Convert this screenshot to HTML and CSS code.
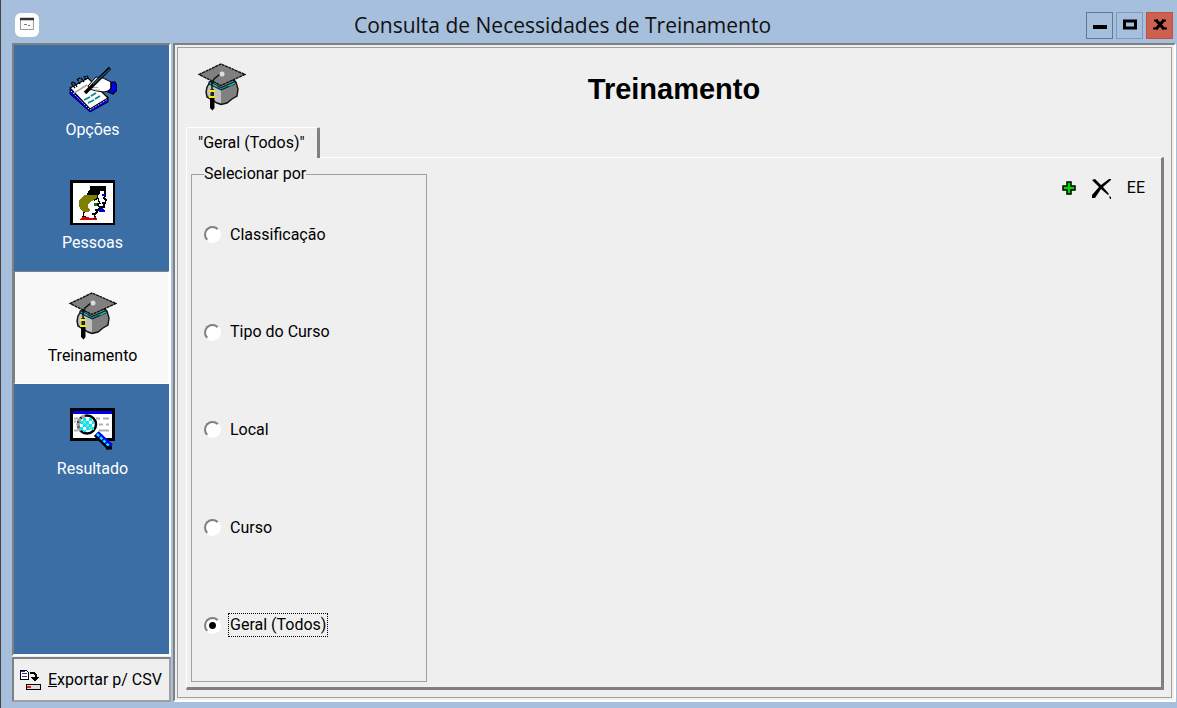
FILE: index.html
```html
<!DOCTYPE html>
<html lang="pt-BR">
<head>
  <meta charset="UTF-8">
  <meta name="viewport" content="width=device-width, initial-scale=1.0">
  <title>Consulta de Necessidades de Treinamento</title>
  <link rel="stylesheet" href="styles.css">
</head>
<body>
  <!-- shared icon: graduation cap -->
  <svg class="defs" aria-hidden="true">
    <symbol id="cap" viewBox="0 0 48 48">
      <path d="M12 19l-3 5-1 5 1 5 5 3 5 3 4 1.500 6-1.500 5-4 5-3 1-7-2-7-2-2z" fill="#808080" stroke="#111" stroke-width="1.400"/>
      <path d="M12 21l11 5v14l-4-1-4-3-5-3-1-4 1-5z" fill="#c0c0c0"/>
      <path d="M11 18.500l12 6 14-6v2.500l-14 6-12-6z" fill="#008c8c" stroke="#111"/>
      <path d="M12 20l7 3.500M31 23l6-3" fill="none" stroke="#00d0d0" stroke-width="1.200"/>
      <path d="M1 11.500l22-10.500 24 10.500-24 11z" fill="#808080" stroke="#111" stroke-width="1.400" stroke-dasharray="3 .6"/>
      <path d="M22 11l-6 5-2 4v8" fill="none" stroke="#111" stroke-width="1.500"/>
      <circle cx="24" cy="11" r="2.500" fill="#ddd"/>
      <path d="M12.500 26h3.500v11h-3.500z" fill="#222"/>
      <path d="M11 28h6M11 34h6" stroke="#ee0" stroke-width="1.800"/>
      <path d="M12 35h4.500v10l-2 2.500-2.500-2.500z"/>
    </symbol>
  </svg>

  <div class="window">
    <header class="titlebar">
      <svg class="app-icon" viewBox="0 0 24 24">
        <rect width="24" height="24" rx="6" fill="#fff"/>
        <path d="M5.500 6v10.500h13V6" fill="#fafafa" stroke="#999"/>
        <path d="M5 6h14" stroke="#333" stroke-width="2.500"/>
        <path d="M9 11.500h3M13 12.500h2" stroke="#777"/>
      </svg>
      <h1 class="caption">Consulta de Necessidades de Treinamento</h1>
      <div class="win-buttons">
        <button class="win-btn minimize" aria-label="Minimizar"><svg viewBox="0 0 14 12"><path d="M0 8h14" stroke="#000" stroke-width="4"/></svg></button>
        <button class="win-btn" aria-label="Maximizar"><svg viewBox="0 0 14 12"><path d="M1.500 2h11v7h-11z" fill="none" stroke="#000" stroke-width="3"/></svg></button>
        <button class="win-btn close" aria-label="Fechar"><svg viewBox="0 0 14 12"><path d="M3 1l8 9M11 1L3 10" stroke="#000" stroke-width="3"/><path d="M1 1.500h4M9 1.500h4M0 9.500h5M9 9.500h5" stroke="#000" stroke-width="2"/></svg></button>
      </div>
    </header>

    <div class="content">
      <aside class="sidebar">
        <nav class="menu">
          <button class="menu-item">
            <svg class="icon" viewBox="0 0 48 48">
              <path d="M1 23v5l20 18 18-10v-5z" fill="#0000e0" stroke="#00004a"/>
              <path d="M1 22l18-10 20 20-18 11z" fill="#fff" stroke="#000" stroke-width="1.200"/>
              <path d="M2 25l19 19 18-11" fill="none" stroke="#ddd" stroke-dasharray="1.500 1.500"/>
              <path d="M5 27l13-8" stroke="#aaa" stroke-width="1.500"/>
              <path d="M6 22l-4-5 3-1 3 5M11 18l-3-5 4-1 3 4M17 14l-2-3 3-1 2 3" fill="none" stroke="#000" stroke-width="1.300" stroke-dasharray="2.500 .8"/>
              <path d="M19 20l8-9 7 1 8 4v8l-7 2-7-1-8-2z" fill="#fff" stroke="#000"/>
              <path d="M21 21.500h8M26 24h5" stroke="#aaa"/>
              <path d="M42 16h4l2 4v4l-4 4-5-2 3-4z" fill="#0000f0" stroke="#000" stroke-width="1.200"/>
              <path d="M16 27L41 2" stroke="#000" stroke-width="3.500"/>
              <path d="M24 18L41 3" stroke="#285078" stroke-width="1.400"/>
              <path d="M15 34l6-3M22 30l5-3M19 37l6-3M26 33l5-3" stroke="#008888" stroke-width="1.800"/>
            </svg>
            <span>Opções</span>
          </button>
          <button class="menu-item">
            <svg class="icon small" viewBox="0 0 45 45" shape-rendering="crispEdges">
              <rect x="1" y="1" width="43" height="43" rx="1" fill="#fff" stroke="#000" stroke-width="3"/>
              <path d="M20 6h16v5h-6v2l-3 3h-10l1-5 2-2z"/>
              <path d="M35 11v5l-1 2 2 2-1 3h-2l1 2v2h-3l-2 2M27 16l3 8" fill="none" stroke="#000" stroke-width="1.500"/>
              <path d="M32 14h3v2h-3zM29 31l2-3h2v1l2 2v1h-6z" fill="#0000e0"/>
              <path d="M14 15h13v3l-3 2-3 1-3 4v3l2 2-1 2h-5l-4-3-1-4v-4l2-3z" fill="#808000"/>
              <path d="M27 19l-3 1M28 23v2l2 3-2 2h-2l1 2-2 2h-3M14 32l-1 5M24 34l2 5" fill="none" stroke="#000" stroke-width="1.500"/>
              <path d="M24 23h3v3h-3z" fill="#008000"/>
              <path d="M11 38l3-2 7 2 5-1 1 2v1H10z" fill="#e00000"/>
              <path d="M13 36l3 1M23 38h3" stroke="#000"/>
            </svg>
            <span>Pessoas</span>
          </button>
          <button class="menu-item selected" aria-current="page">
            <svg class="icon"><use href="#cap"/></svg>
            <span>Treinamento</span>
          </button>
          <button class="menu-item">
            <svg class="icon small" viewBox="0 0 45 45">
              <path d="M1.500 3.500h42v30h-42z" fill="#fff" stroke="#000" stroke-width="3"/>
              <path d="M3 6.500h39" stroke="#0000f0" stroke-width="3"/>
              <path d="M26 12.500h4M33 12.500h6M4 12.500h4M4 15.500h2M29 18.500h4M36 18.500h3M29 24.500h10M4 24.500h4" stroke="#b0b0b0" stroke-width="1.800"/>
              <circle cx="17" cy="18.500" r="9" fill="#fff" stroke="#000" stroke-width="2.500"/>
              <path d="M15 9.800a9 9 0 0 0-4 15.500" fill="none" stroke="#a0a0a0" stroke-width="2.800" stroke-dasharray="4 1"/>
              <path d="M13 12h3v3h-3zM19 12h3v3h-3zM10 15h3v3h-3zM16 15h3v3h-3zM22 15h2v3h-2zM13 18h3v3h-3zM19 18h3v3h-3zM10 21h3v3h-3zM16 21h3v3h-3zM22 21h2v3h-2zM13 24h3v2h-3z" fill="#00e8f0"/>
              <path d="M13 15h3v3h-3zM19 21h3v3h-3zM16 18h3v3h-3z" fill="#70dada"/>
              <path d="M26 28l14 14" stroke="#000" stroke-width="6"/>
              <path d="M27 27l14 13" stroke="#0000f0" stroke-width="5"/>
              <path d="M27 28l12 12" stroke="#00e8ff" stroke-width="2.500" stroke-dasharray="3 1.500"/>
              <path d="M36 42h6" stroke="#000" stroke-width="3"/>
            </svg>
            <span>Resultado</span>
          </button>
        </nav>
        <button class="export">
          <svg class="export-icon" viewBox="0 0 22 21" shape-rendering="crispEdges">
            <path d="M1 1h6l2 2v7H1z" fill="#fff" stroke="#000"/>
            <path d="M2 2h4v1H2zM3 4h5v1H3zM3 7h5v1H3z" fill="#3030a0"/>
            <path d="M11 4h4l2 2v3" fill="none" stroke="#000" stroke-width="2"/>
            <path d="M11 8h9l-4 5z"/>
            <path d="M7 15h14v5H7z" fill="#ddd" stroke="#000"/>
            <path d="M8 17h4v2H8z" fill="#e02020"/>
          </svg>
          <span><u>E</u>xportar p/ CSV</span>
        </button>
      </aside>

      <main class="panel">
        <div class="panel-head">
          <svg class="icon"><use href="#cap"/></svg>
          <h2>Treinamento</h2>
        </div>
        <div class="tabs" role="tablist">
          <button class="tab" role="tab" aria-selected="true">"Geral (Todos)"</button>
        </div>
        <div class="tab-page" role="tabpanel">
          <fieldset class="group">
            <legend>Selecionar por</legend>
            <label class="option"><input type="radio" name="filtro"><span>Classificação</span></label>
            <label class="option"><input type="radio" name="filtro"><span>Tipo do Curso</span></label>
            <label class="option"><input type="radio" name="filtro"><span>Local</span></label>
            <label class="option"><input type="radio" name="filtro"><span>Curso</span></label>
            <label class="option"><input type="radio" name="filtro" checked><span>Geral (Todos)</span></label>
          </fieldset>
          <div class="tools">
            <button class="tool" aria-label="Adicionar"><svg width="14" height="14" viewBox="0 0 14 14"><path d="M5 1h4v4h4v4H9v4H5V9H1V5h4z" fill="#00d800" stroke="#000" stroke-width="1.500"/></svg></button>
            <button class="tool" aria-label="Excluir"><svg width="21" height="21" viewBox="0 0 21 21"><path d="M1 2l3-1 6 6 8-6h2v1l-8 7 6 7-1 1-7-6-4 6-2 3H1v-3l7-8z"/><path d="M18 18l2 1v2h-1z"/></svg></button>
            <button class="tool">EE</button>
          </div>
        </div>
      </main>
    </div>
  </div>
</body>
</html>
```
FILE: styles.css
```css
* {
  box-sizing: border-box;
}
body {
  margin: 0;
  background: #a6bfdc;
  color: #000;
  font-family: Roboto, "Liberation Sans", sans-serif;
  font-size: 16px;
  line-height: 20px;
}
button {
  margin: 0;
  padding: 0;
  border: 0;
  background: none;
  color: inherit;
  font: inherit;
}
svg {
  display: block;
}
.defs {
  position: absolute;
  width: 0;
  height: 0;
}

.window {
  display: flex;
  flex-direction: column;
  min-height: 100vh;
  padding: 0 1px 6px 11px;
  border-left: 1px solid #444;
}

/* title bar */
.titlebar {
  display: flex;
  align-items: center;
  height: 43px;
  padding: 7px 3px 0 3px;
}
.app-icon {
  width: 24px;
  height: 24px;
}
.caption {
  flex: 1;
  margin: 0;
  color: #111;
  font-family: "Open Sans", "Noto Sans", sans-serif;
  font-size: 21px;
  font-weight: normal;
  line-height: 28px;
  text-align: center;
}
.win-buttons {
  display: flex;
  gap: 3px;
}
.win-btn {
  display: flex;
  align-items: center;
  justify-content: center;
  width: 27px;
  height: 27px;
  border: 1px solid #8299bf;
}
.win-btn svg {
  width: 14px;
  height: 12px;
}
.minimize {
  border-color: #60779b;
}
.close {
  border-color: #c44f43;
  background: #cd614f;
}

.content {
  display: flex;
  flex: 1;
  gap: 2px;
}

/* left menu */
.sidebar {
  display: flex;
  flex-direction: column;
  flex: none;
  width: 159px;
  background: #efefef;
}
.menu {
  flex: 1;
  border: 2px solid;
  border-color: #808080 #fff #fff #808080;
  background: #3a6ea5;
}
.menu-item {
  display: flex;
  flex-direction: column;
  align-items: center;
  justify-content: space-between;
  width: 100%;
  height: 113px;
  padding: 20px 0 17px 2px;
  border: 1px solid transparent;
  color: #fff;
}
.menu-item.selected {
  border-color: #808080 #fff #fff #808080;
  background: #f8f8f8;
  color: #000;
}
.icon {
  width: 48px;
  height: 48px;
}
.icon.small {
  width: 45px;
  height: 45px;
  margin-top: 1px;
}
.export {
  display: flex;
  align-items: center;
  gap: 7px;
  height: 45px;
  margin-top: 1px;
  padding-left: 5px;
  border: 2px solid;
  border-color: #808080 #a0a0a0 #a0a0a0 #808080;
  background: #efefef;
  white-space: nowrap;
}
.export-icon {
  width: 22px;
  height: 21px;
}

/* right panel */
.panel {
  display: flex;
  flex-direction: column;
  flex: 1;
  padding: 1px 10px 10px 9px;
  border: 2px solid;
  border-color: #808080 #fff #fff #808080;
  outline: 1px solid #a0a0a0;
  outline-offset: -5px;
  background: #efefef;
}
.panel-head {
  display: flex;
  align-items: center;
  height: 81px;
  padding: 0 62px 0 14px;
}
.panel-head h2 {
  flex: 1;
  margin: 0;
  padding-top: 4px;
  font-family: "Liberation Sans", sans-serif;
  font-size: 29px;
  line-height: 32px;
  text-align: center;
}
.tabs {
  display: flex;
  margin: 0 0 -1px 2px;
}
.tab {
  z-index: 1;
  height: 31px;
  padding: 0 12px 0 11px;
  border: 1px solid #fff;
  border-right: 3px solid #808080;
  border-bottom: 0;
  border-radius: 2px 2px 0 0;
  background: #efefef;
}
.tab-page {
  display: flex;
  flex: 1;
  align-items: stretch;
  justify-content: space-between;
  margin-left: 2px;
  padding: 6px 16px 5px 4px;
  border: 1px solid #fff;
  border-right: 3px solid #808080;
  border-bottom: 3px solid #808080;
}
.group {
  display: flex;
  flex-direction: column;
  width: 236px;
  margin: 0;
  padding: 2px 12px 7px 12px;
  border: 1px solid #a0a0a0;
}
.group legend {
  padding: 0;
}
.option {
  display: flex;
  flex: 1;
  align-items: center;
  gap: 8px;
}
.option span {
  padding: 1px;
}
.option input {
  width: 17px;
  height: 17px;
  margin: 0;
  appearance: none;
  border: 2px solid;
  border-color: #808080 #fff #fff #808080;
  border-radius: 50%;
  background: #fff;
}
.option input:checked {
  background: radial-gradient(circle, #000 3px, #fff 4px);
}
.option input:checked + span {
  outline: 1px dotted #000;
}
.tools {
  display: flex;
  align-items: center;
  gap: 15px;
  height: 24px;
  margin-top: 12px;
}
```
